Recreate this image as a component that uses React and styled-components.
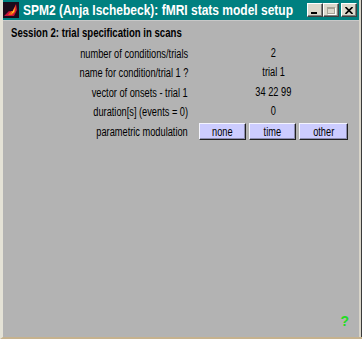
import React from "react";
import styled, { createGlobalStyle } from "styled-components";

const GlobalStyle = createGlobalStyle`
  html, body {
    margin: 0;
    padding: 0;
    background: #b3b3b3;
  }
  body {
    font-family: "Liberation Sans", Arial, sans-serif;
  }
`;

const Window = styled.div`
  width: 362px;
  height: 339px;
  box-sizing: border-box;
  display: flex;
  flex-direction: column;
  background: #b3b3b3;
  border-left: 3px solid #e4e2d6;
  border-bottom: 2px solid #c6b28e;
  box-shadow: inset -1px 0 #3a3a3a, inset -3px 0 #d8d4c8;
`;

const TitleBar = styled.div`
  height: 20px;
  margin-right: 3px;
  display: flex;
  align-items: center;
  background: #008080;
  padding: 0 2px 0 0;
`;

const AppIcon = styled.svg`
  width: 16px;
  height: 16px;
  margin: 0 4px 0 0;
  flex: none;
`;

const TitleText = styled.div`
  flex: 1;
  min-width: 0;
  color: #ffffff;
  font-weight: bold;
  font-size: 14px;
  white-space: nowrap;
`;

/* the original fonts are narrow; squeeze the Arial-width text to match */
const Narrow = styled.span`
  display: inline-block;
  white-space: nowrap;
  transform: scaleX(${(p) => p.$x || 0.77});
  transform-origin: ${(p) => p.$origin || "center"};
`;

const Controls = styled.div`
  display: flex;
  align-items: center;
`;

const CtlButton = styled.div`
  width: 16px;
  height: 14px;
  box-sizing: border-box;
  margin-left: ${(p) => (p.$gap ? "2px" : "0")};
  background: #dcd8cc;
  border-top: 1px solid #ffffff;
  border-left: 1px solid #ffffff;
  border-right: 1px solid #404040;
  border-bottom: 1px solid #404040;
  box-shadow: inset -1px -1px #808080;
  display: flex;
  align-items: center;
  justify-content: center;
`;

const MinGlyph = styled.div`
  width: 6px;
  height: 2px;
  background: #000;
  margin-top: 6px;
  margin-right: 2px;
`;

const MaxGlyph = styled.div`
  width: 8px;
  height: 7px;
  box-sizing: border-box;
  border: 1px solid #a8a498;
  border-top-width: 2px;
  box-shadow: 1px 1px #ffffff;
`;

const Panel = styled.div`
  flex: 1;
  display: flex;
  flex-direction: column;
  margin-right: 3px;
  border-top: 1px solid #c8c8c8;
`;

const Heading = styled.div`
  padding: 5px 0 0 8px;
  font-weight: bold;
  font-size: 12px;
  line-height: 14px;
  color: #000;
`;

const Rows = styled.div`
  margin-top: 4px;
  display: grid;
  grid-template-columns: 185px 149px;
  column-gap: 11px;
  grid-auto-rows: 19.5px;
  align-items: center;
`;

const Label = styled.div`
  text-align: right;
  font-size: 12px;
  color: #000;
`;

const Value = styled.div`
  text-align: center;
  font-size: 12px;
  color: #000;
  margin-top: -2px;
`;

const ButtonGroup = styled.div`
  display: grid;
  grid-template-columns: 47px 47px 49px;
  column-gap: 3px;
`;

const Choice = styled.button`
  height: 17px;
  padding: 0;
  box-sizing: border-box;
  font-family: inherit;
  font-size: 12px;
  color: #000;
  background: #ccccff;
  border-top: 1px solid #f4f4ff;
  border-left: 1px solid #f4f4ff;
  border-right: 1px solid #202020;
  border-bottom: 1px solid #202020;
  box-shadow: inset -1px -1px #8c8cb0;
`;

const Footer = styled.div`
  margin-top: auto;
  display: flex;
  justify-content: flex-end;
  padding: 0 10px 9px 0;
`;

const Help = styled.div`
  color: #22dd22;
  font-weight: bold;
  font-size: 14px;
  line-height: 14px;
`;

const rows = [
  { label: "number of conditions/trials", value: "2" },
  { label: "name for condition/trial 1 ?", value: "trial 1" },
  { label: "vector of onsets - trial 1", value: "34 22 99" },
  { label: "duration[s] (events = 0)", value: "0" },
];

const choices = ["none", "time", "other"];

export default function App() {
  return (
    <>
      <GlobalStyle />
      <Window>
        <TitleBar>
          <AppIcon viewBox="0 0 16 16">
            <rect width="16" height="16" fill="#1c0a1a" />
            <path d="M1 14 L6 9 L9 10 L13 2 L14 8 L11 14 Z" fill="#c8103c" />
            <path d="M5 13 L8 9 L10 9 L13 3 L12 10 L9 13 Z" fill="#f05a10" />
            <path d="M8 12 L10 9 L12 5 L11 10 Z" fill="#ffd030" />
          </AppIcon>
          <TitleText>
            <Narrow $x={0.857} $origin="left">
              SPM2 (Anja Ischebeck): fMRI stats model setup
            </Narrow>
          </TitleText>
          <Controls>
            <CtlButton>
              <MinGlyph />
            </CtlButton>
            <CtlButton>
              <MaxGlyph />
            </CtlButton>
            <CtlButton $gap>
              <svg width="8" height="7" viewBox="0 0 8 7">
                <path d="M0.5 0 L7.5 7 M7.5 0 L0.5 7" stroke="#000" strokeWidth="1.6" />
              </svg>
            </CtlButton>
          </Controls>
        </TitleBar>
        <Panel>
          <Heading>
            <Narrow $x={0.8} $origin="left">
              Session 2: trial specification in scans
            </Narrow>
          </Heading>
          <Rows>
            {rows.map((r) => (
              <React.Fragment key={r.label}>
                <Label>
                  <Narrow $origin="right">{r.label}</Narrow>
                </Label>
                <Value>
                  <Narrow>{r.value}</Narrow>
                </Value>
              </React.Fragment>
            ))}
            <Label>
              <Narrow $origin="right">parametric modulation</Narrow>
            </Label>
            <ButtonGroup>
              {choices.map((c) => (
                <Choice key={c}>
                  <Narrow>{c}</Narrow>
                </Choice>
              ))}
            </ButtonGroup>
          </Rows>
          <Footer>
            <Help>?</Help>
          </Footer>
        </Panel>
      </Window>
    </>
  );
}
